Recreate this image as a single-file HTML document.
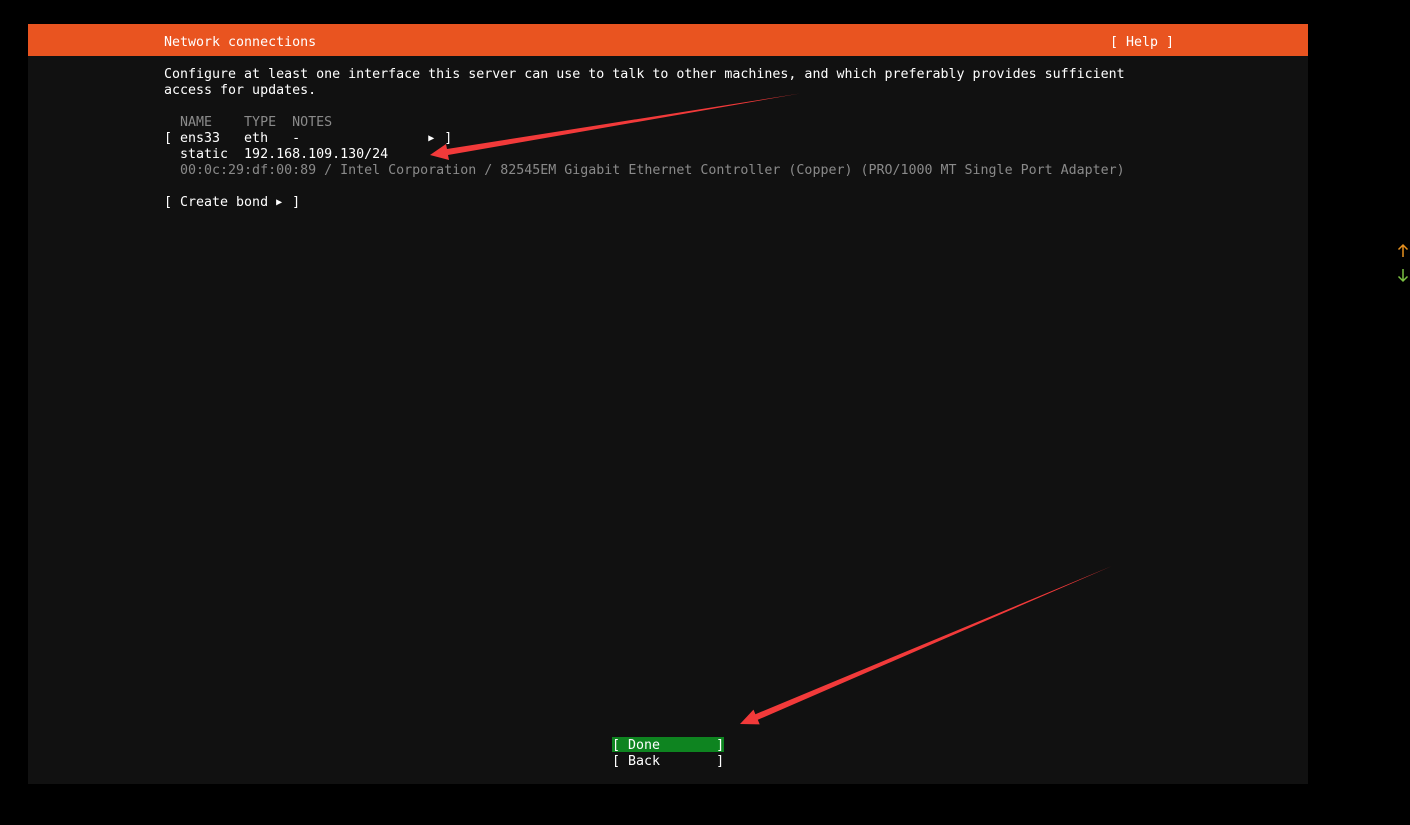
<!DOCTYPE html>
<html><head><meta charset="utf-8"><style>
body{margin:0;width:1410px;height:825px;background:#000;position:relative;overflow:hidden;font-family:"DejaVu Sans Mono","Liberation Mono",monospace;font-size:13.3px;}
#term{position:absolute;left:28px;top:24px;width:1280px;height:760px;background:#111;}
#hdr{position:absolute;left:28px;top:24px;width:1280px;height:32px;background:#e95420;}
.t{position:absolute;white-space:pre;line-height:16px;color:#fff;}
.g{color:#8a8a8a}
.tr{display:inline-block;width:8px;font-size:10px;vertical-align:top;line-height:16px}
</style></head><body>
<div id="term"></div>
<div id="hdr"></div>
<div class="t" style="left:164px;top:35px">Network connections</div>
<div class="t" style="left:1110px;top:35px">[ Help ]</div>
<div class="t" style="left:164px;top:67px">Configure at least one interface this server can use to talk to other machines, and which preferably provides sufficient
access for updates.</div>
<div class="t g" style="left:164px;top:115px">  NAME    TYPE  NOTES</div>
<div class="t" style="left:164px;top:131px">[ ens33   eth   -                <span class="tr">▶</span> ]</div>
<div class="t" style="left:164px;top:147px">  static  192.168.109.130/24</div>
<div class="t g" style="left:164px;top:163px">  00:0c:29:df:00:89 / Intel Corporation / 82545EM Gigabit Ethernet Controller (Copper) (PRO/1000 MT Single Port Adapter)</div>
<div class="t" style="left:164px;top:195px">[ Create bond <span class="tr">▶</span> ]</div>
<div style="position:absolute;left:612px;top:737px;width:112px;height:15px;background:#0e8420"></div>
<div class="t" style="left:612px;top:738px">[ Done       ]</div>
<div class="t" style="left:612px;top:754px">[ Back       ]</div>
<svg style="position:absolute;left:0;top:0" width="1410" height="825">
<polygon fill="#f23a3a" points="430,155 449,160 448,155 800,93.5 447,149 446,144"/>
<polygon fill="#f23a3a" points="740,724 759.7,724.4 757.8,719.8 1112,566 755.4,714.2 753.5,709.6"/>
<path d="M1403 257V245M1398.5 249.5L1403 245L1407.5 249.5" stroke="#e8911f" stroke-width="1.5" fill="none"/>
<path d="M1403 269V281M1398.5 276.5L1403 281L1407.5 276.5" stroke="#7bc043" stroke-width="1.5" fill="none"/>
</svg>
</body></html>
